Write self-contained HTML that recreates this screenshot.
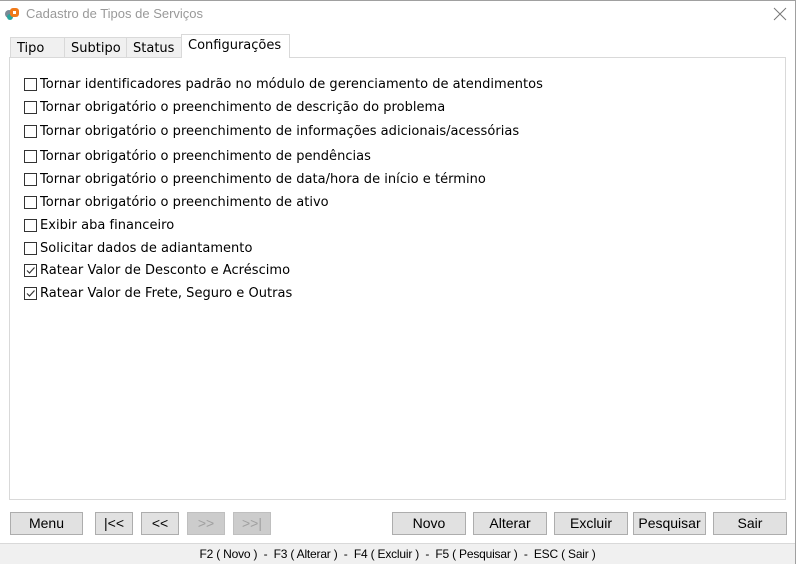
<!DOCTYPE html>
<html><head><meta charset="utf-8"><style>
*{box-sizing:border-box;margin:0;padding:0}
body{width:796px;height:564px;background:#fff;position:relative;overflow:hidden;font-family:"DejaVu Sans",Verdana,sans-serif;font-size:13px;color:#000}
.win{position:absolute;left:0;top:0;width:796px;height:564px;border:1px solid #a0a0a0;border-bottom:none;border-left:none}
.title{position:absolute;left:26px;top:6px;font-family:"Liberation Sans",sans-serif;font-size:13px;color:#999}
.close{position:absolute;left:773px;top:7px}
.tab{position:absolute;top:37px;height:21px;background:#f0f0f0;border:1px solid #d9d9d9;border-bottom:none;font-size:13px;padding-top:3px;padding-left:6px}
.tab.act{top:34px;height:24px;background:#fff;border-color:#d9d9d9;z-index:2;padding-top:3px}
.panel{position:absolute;left:9px;top:57px;width:777px;height:443px;border:1px solid #d9d9d9;background:#fff}
.row{position:absolute;left:24px;height:16px;line-height:16px;white-space:nowrap}
.cb{position:absolute;left:0;top:1px;width:13px;height:13px;border:1px solid #333;background:#fff}
.row span.t{position:absolute;left:16px;top:0;letter-spacing:0.03px}
.btn{position:absolute;top:512px;height:23px;background:#e1e1e1;border:1px solid #adadad;text-align:center;line-height:21px;font-family:"Liberation Sans",sans-serif;font-size:14px}
.dis{color:#a0a0a0;background:#cccccc;border-color:#bfbfbf}
.status{position:absolute;left:0;top:543px;width:795px;height:21px;background:#f0f0f0;border-top:1px solid #d9d9d9;text-align:center;font-family:"Liberation Sans",sans-serif;font-size:12px;line-height:21px;letter-spacing:-0.2px}
</style></head><body>
<div class="win"></div>
<svg style="position:absolute;left:4px;top:5px" width="16" height="16" viewBox="0 0 16 16"><circle cx="5" cy="9" r="4" fill="#7a8a96"/><circle cx="6" cy="12" r="3" fill="#2aa6a0"/><rect x="6" y="3" width="9" height="9" rx="3" fill="#f07a1a"/><rect x="9" y="6" width="3" height="3" fill="#fff"/></svg>
<div class="title">Cadastro de Tipos de Serviços</div>
<svg class="close" width="14" height="14" viewBox="0 0 14 14"><path d="M1 1L13 13M13 1L1 13" stroke="#777" stroke-width="1"/></svg>
<div class="tab" style="left:10px;width:55px">Tipo</div>
<div class="tab" style="left:64px;width:63px">Subtipo</div>
<div class="tab" style="left:126px;width:56px">Status</div>
<div class="tab act" style="left:181px;width:109px">Configurações</div>
<div class="panel"></div>
<div class="row" style="top:77px"><div class="cb"></div><span class="t">Tornar identificadores padrão no módulo de gerenciamento de atendimentos</span></div>
<div class="row" style="top:100px"><div class="cb"></div><span class="t">Tornar obrigatório o preenchimento de descrição do problema</span></div>
<div class="row" style="top:124px"><div class="cb"></div><span class="t">Tornar obrigatório o preenchimento de informações adicionais/acessórias</span></div>
<div class="row" style="top:149px"><div class="cb"></div><span class="t">Tornar obrigatório o preenchimento de pendências</span></div>
<div class="row" style="top:172px"><div class="cb"></div><span class="t">Tornar obrigatório o preenchimento de data/hora de início e término</span></div>
<div class="row" style="top:195px"><div class="cb"></div><span class="t">Tornar obrigatório o preenchimento de ativo</span></div>
<div class="row" style="top:218px"><div class="cb"></div><span class="t">Exibir aba financeiro</span></div>
<div class="row" style="top:241px"><div class="cb"></div><span class="t">Solicitar dados de adiantamento</span></div>
<div class="row" style="top:263px"><div class="cb"><svg width="11" height="11" style="position:absolute;left:0;top:0"><path d="M2 5.5L4.5 8L9.5 2.5" stroke="#333" stroke-width="1.2" fill="none"/></svg></div><span class="t">Ratear Valor de Desconto e Acréscimo</span></div>
<div class="row" style="top:286px"><div class="cb"><svg width="11" height="11" style="position:absolute;left:0;top:0"><path d="M2 5.5L4.5 8L9.5 2.5" stroke="#333" stroke-width="1.2" fill="none"/></svg></div><span class="t">Ratear Valor de Frete, Seguro e Outras</span></div>
<div class="btn" style="left:10px;width:73px">Menu</div>
<div class="btn" style="left:95px;width:38px">|&lt;&lt;</div>
<div class="btn" style="left:141px;width:38px">&lt;&lt;</div>
<div class="btn dis" style="left:187px;width:38px">&gt;&gt;</div>
<div class="btn dis" style="left:233px;width:38px">&gt;&gt;|</div>
<div class="btn" style="left:392px;width:74px">Novo</div>
<div class="btn" style="left:473px;width:74px">Alterar</div>
<div class="btn" style="left:554px;width:74px">Excluir</div>
<div class="btn" style="left:633px;width:73px">Pesquisar</div>
<div class="btn" style="left:713px;width:74px">Sair</div>
<div class="status">F2 ( Novo )&nbsp; - &nbsp;F3 ( Alterar )&nbsp; - &nbsp;F4 ( Excluir )&nbsp; - &nbsp;F5 ( Pesquisar )&nbsp; - &nbsp;ESC ( Sair )</div>
</body></html>
